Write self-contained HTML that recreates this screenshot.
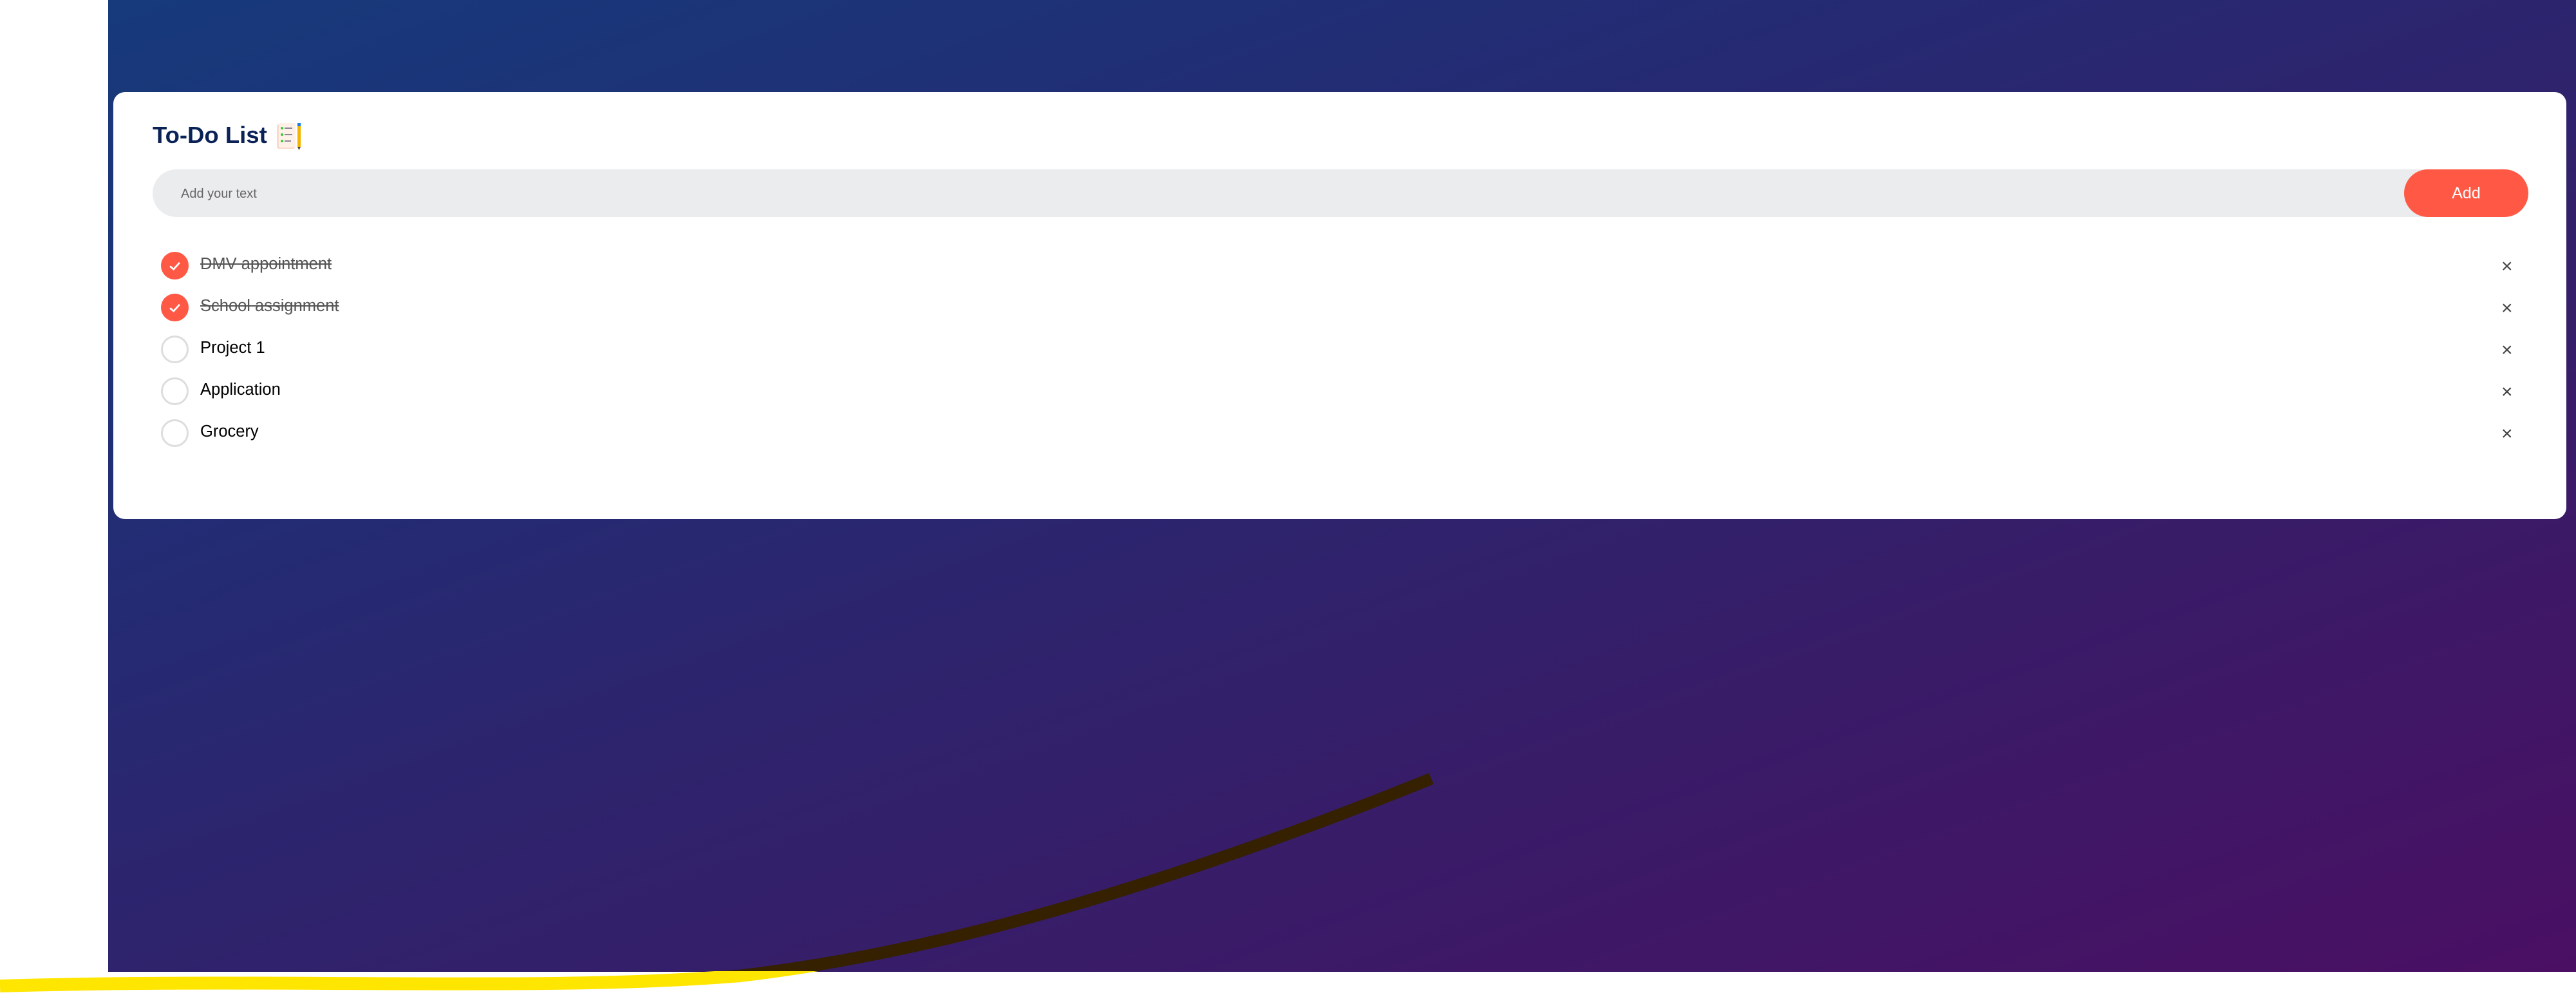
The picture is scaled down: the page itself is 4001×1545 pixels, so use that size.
<!DOCTYPE html>
<html><head><meta charset="utf-8"><style>
html,body{margin:0;padding:0;width:4001px;height:1545px;background:#fff;overflow:hidden;font-family:"Liberation Sans",Arial,sans-serif}
.bg{position:absolute;left:168px;top:0;width:3833px;height:1509px;background:linear-gradient(160deg,#163a7c 0%,#252a72 35%,#33206a 60%,#4a0f63 100%)}
.card{position:absolute;left:176px;top:143px;width:3810px;height:663px;background:#fff;border-radius:18px}
h1{position:absolute;left:61px;top:46px;margin:0;font-size:36.5px;font-weight:bold;color:#0b2257}
.emoji{position:absolute;left:253px;top:47px;width:40px;height:44px}
.input{position:absolute;left:61px;top:120px;width:3690px;height:74px;background:#ebecee;border-radius:37px}
.input span{position:absolute;left:44px;top:27px;font-size:20px;color:#666}
.btn{position:absolute;left:3558px;top:120px;width:193px;height:74px;background:#ff5945;border-radius:37px;color:#fff;font-size:25px;text-align:center;line-height:74px}
.row{position:absolute;left:74px;height:44px;width:3660px}
.c{position:absolute;left:0;top:0;width:37px;height:37px;border:3px solid #ddd;border-radius:50%;box-sizing:content-box}
.c.on{background:#ff5945;border-color:#ff5945}
.t{position:absolute;left:61px;top:5px;font-size:25.5px;color:#000}
.t.done{text-decoration:line-through;color:#555}
.x{position:absolute;left:3635px;top:6px;font-size:30px;color:#444}
</style></head><body>
<div class="bg"></div>
<svg style="position:absolute;left:0;top:0" width="4001" height="1545">
<defs><clipPath id="a"><rect x="0" y="0" width="4001" height="1508"/></clipPath><clipPath id="b"><rect x="0" y="1508" width="4001" height="40"/></clipPath></defs>
<path d="M0 1531 C 450 1518 850 1540 1150 1515 C 1450 1480 1800 1380 2223 1209" fill="none" stroke="#352000" stroke-width="19" clip-path="url(#a)"/>
<path d="M0 1531 C 450 1518 850 1540 1150 1515 C 1450 1480 1800 1380 2223 1209" fill="none" stroke="#ffe600" stroke-width="20" clip-path="url(#b)"/>
</svg>
<div class="card">
<h1>To-Do List</h1>
<svg class="emoji" viewBox="0 0 40 44"><rect x="1" y="3" width="28" height="38" rx="3" fill="#fbd9cc"/><rect x="4" y="1" width="26" height="38" rx="2" fill="#fff0e8"/><circle cx="9" cy="9" r="2" fill="#3c3"/><circle cx="9" cy="19" r="2" fill="#3c3"/><circle cx="9" cy="29" r="2" fill="#3c3"/><rect x="13" y="8" width="12" height="2" fill="#889"/><rect x="13" y="18" width="12" height="2" fill="#889"/><rect x="13" y="28" width="10" height="2" fill="#889"/><rect x="33" y="2" width="5" height="36" fill="#f5b400"/><rect x="33" y="1" width="5" height="5" fill="#1a7fe0"/><path d="M33 38 L38 38 L35.5 43Z" fill="#444"/></svg>
<div class="input"><span>Add your text</span></div>
<div class="btn">Add</div>
<div class="row" style="top:248px"><div class="c on"><svg width="37" height="37" viewBox="0 0 40 40"><path d="M12 21 L18 26 L28 15" fill="none" stroke="#fff" stroke-width="3"/></svg></div><div class="t done">DMV appointment</div><div class="x">×</div></div>
<div class="row" style="top:313px"><div class="c on"><svg width="37" height="37" viewBox="0 0 40 40"><path d="M12 21 L18 26 L28 15" fill="none" stroke="#fff" stroke-width="3"/></svg></div><div class="t done">School assignment</div><div class="x">×</div></div>
<div class="row" style="top:378px"><div class="c"></div><div class="t">Project 1</div><div class="x">×</div></div>
<div class="row" style="top:443px"><div class="c"></div><div class="t">Application</div><div class="x">×</div></div>
<div class="row" style="top:508px"><div class="c"></div><div class="t">Grocery</div><div class="x">×</div></div>
</div>
</body></html>
